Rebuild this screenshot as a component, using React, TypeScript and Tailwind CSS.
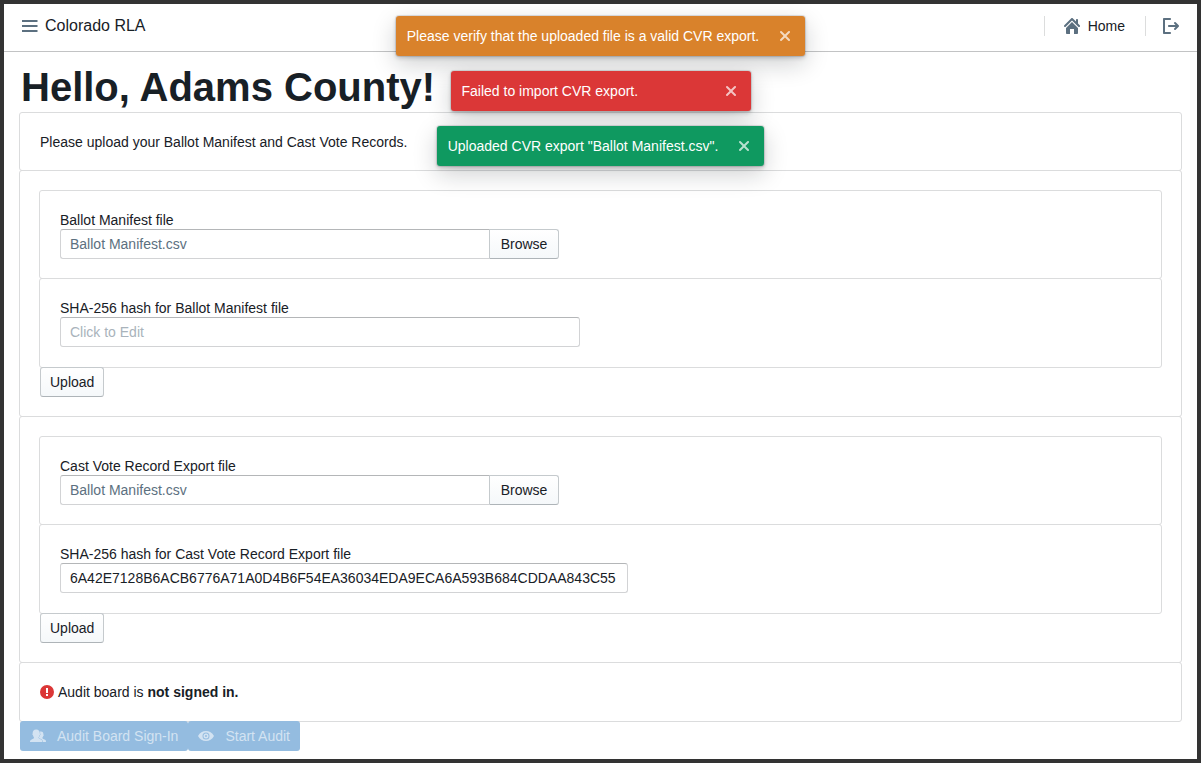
import React, { useState } from "react";

const paths = {
  home: "M2 10v5c0 .55.45 1 1 1h3v-5h4v5h3c.55 0 1-.45 1-1v-5L8 4l-6 6zm13.71-2.71L14 5.59V2c0-.55-.45-1-1-1s-1 .45-1 1v1.59L8.71.29C8.53.11 8.28 0 8 0s-.53.11-.71.29l-7 7a1.003 1.003 0 0 0 1.42 1.42L8 2.41l6.29 6.29c.18.19.43.3.71.3a1.003 1.003 0 0 0 .71-1.71z",
  logOut: "M7 14H2V2h5c.55 0 1-.45 1-1s-.45-1-1-1H1C.45 0 0 .45 0 1v14c0 .55.45 1 1 1h6c.55 0 1-.45 1-1s-.45-1-1-1zm8.71-6.71l-3-3a1.003 1.003 0 0 0-1.42 1.42L12.59 7H6c-.55 0-1 .45-1 1s.45 1 1 1h6.59l-1.29 1.29c-.19.18-.3.43-.3.71a1.003 1.003 0 0 0 1.71.71l3-3c.18-.18.29-.43.29-.71 0-.28-.11-.53-.29-.71z",
  cross: "M9.41 8l3.29-3.29c.19-.18.3-.43.3-.71a1.003 1.003 0 0 0-1.71-.71L8 6.59l-3.29-3.3a1.003 1.003 0 0 0-1.42 1.42L6.59 8 3.3 11.29c-.19.18-.3.43-.3.71a1.003 1.003 0 0 0 1.71.71L8 9.41l3.29 3.29c.18.19.43.3.71.3a1.003 1.003 0 0 0 .71-1.71L9.41 8z",
  menu: "M.5 2h15v2H.5a.5.5 0 0 1 0-2zM.5 7h15v2H.5a.5.5 0 0 1 0-2zM.5 12h15v2H.5a.5.5 0 0 1 0-2z",
  eye: "M0 8c1.800-3.200 4.700-5 8-5s6.200 1.800 8 5c-1.800 3.200-4.700 5-8 5s-6.200-1.800-8-5zm8-3.500a3.500 3.500 0 1 0 0 7 3.500 3.500 0 0 0 0-7zM8 5.500a2.500 2.500 0 1 1 0 5 2.500 2.500 0 0 1 0-5zM8 7a1 1 0 1 0 0 2 1 1 0 0 0 0-2z",
  error: "M8 1a7 7 0 1 0 0 14A7 7 0 0 0 8 1zM7 4h2v5H7zM7 10h2v2H7z",
};

function Icon({ name, className = "" }: { name: keyof typeof paths; className?: string }) {
  return (
    <svg viewBox="0 0 16 16" aria-hidden="true" fillRule="evenodd" className={`size-4 shrink-0 fill-current ${className}`}>
      <path d={paths[name]} />
    </svg>
  );
}

function PeopleIcon() {
  return (
    <svg viewBox="0 0 16 16" aria-hidden="true" className="size-4 shrink-0 fill-current">
      <path d="M10.800 3.500c2 0 2.700 1.300 2.600 3 .2.200.3.400.3.700 0 .4-.2.700-.5.800-.1.800-.8 1.400-.8 2 .1.600.800.900 1.700 1.300 1.400.5 1.900.9 1.900 2.700H8V3.500z" />
      <path
        className="stroke-[#94bce0]"
        strokeWidth="1"
        paintOrder="stroke"
        d="M0 14c0-1.600.300-2 1.700-2.600 1.200-.5 2.200-.8 2.300-1.700 0-.5-.9-1.400-1-2.400-.3-.1-.6-.5-.6-1 0-.3.1-.6.300-.8-.2-2.300.9-4 3.500-4s3.700 1.700 3.500 4c.2.2.3.5.3.800 0 .5-.3.900-.6 1-.1 1-1 1.900-1 2.400.1.900 1.100 1.200 2.300 1.700 1.400.6 1.700 1 1.700 2.600z"
      />
    </svg>
  );
}

const plainButton =
  "h-[30px] shrink-0 border border-[#c5cacd] border-b-[#aeb4b8] bg-linear-to-b from-white to-[#f5f8fa] px-[9px]";
const field =
  "h-[30px] min-w-0 max-w-full border border-[#d2d3d5] border-t-[#b4b6b8] bg-white px-[9px] outline-none";

function Card({ children, className }: { children: React.ReactNode; className: string }) {
  return <div className={`-mt-px rounded-[3px] border border-[#dbdcdd] ${className}`}>{children}</div>;
}

function UploadForm({ id, name, hash, hashWidth }: { id: string; name: string; hash: string; hashWidth: string }) {
  const [value, setValue] = useState(hash);
  return (
    <Card className="p-[19px] pt-5">
      <form onSubmit={(e) => e.preventDefault()}>
        <Card className="px-5 pt-5 pb-[19px]">
          <label htmlFor={`${id}-file`} className="block">{name} file</label>
          <div className="flex w-[499px] max-w-full">
            <input
              id={`${id}-file`}
              readOnly
              value="Ballot Manifest.csv"
              className={`${field} flex-1 rounded-l-[3px] border-r-0 text-[#5c7080]`}
            />
            <button type="button" className={`${plainButton} w-[70px] rounded-r-[3px]`}>Browse</button>
          </div>
        </Card>
        <Card className="p-5">
          <label htmlFor={`${id}-hash`} className="block">SHA-256 hash for {name} file</label>
          <input
            id={`${id}-hash`}
            value={value}
            onChange={(e) => setValue(e.target.value)}
            placeholder="Click to Edit"
            className={`${field} ${hashWidth} block rounded-[3px] placeholder:text-[#a9b3bb]`}
          />
        </Card>
        <button type="submit" className={`${plainButton} -mt-px ml-px block rounded-[3px]`}>Upload</button>
      </form>
    </Card>
  );
}

function Toast({ children, className }: { children: React.ReactNode; className: string }) {
  return (
    <div
      role="alert"
      className={`pointer-events-auto flex h-10 min-w-[300px] items-center justify-between rounded-[3px] pr-3 pl-[11px] text-white shadow-[0_0_0_1px_rgba(16,22,26,0.1),0_2px_4px_rgba(16,22,26,0.2),0_8px_24px_rgba(16,22,26,0.2)] ${className}`}
    >
      <span>{children}</span>
      <button type="button" aria-label="Close" className="ml-[18px] text-white/70">
        <Icon name="cross" />
      </button>
    </div>
  );
}

const blueButton = "flex h-[30px] items-center gap-[11px] rounded-[3px] bg-[#94bce0] px-[10px] text-[#d3e3f2]";

export default function App() {
  return (
    <div className="relative min-h-screen border-4 border-[#333] bg-white font-['Liberation_Sans',Arial,sans-serif] text-[14px] leading-[18px] text-[#182026]">
      <header className="flex h-12 items-center justify-between border-b border-[#c2c3c4] pr-[18px] pb-[3px] pl-[18px]">
        <div className="flex items-center gap-[7px]">
          <button type="button" aria-label="Menu" className="text-[#5c7080]"><Icon name="menu" /></button>
          <span className="text-[16px]">Colorado RLA</span>
        </div>
        <nav className="flex items-center">
          <span className="h-5 w-px bg-[#dcdddd]" />
          <a href="#home" className="mr-5 ml-[19px] flex items-center gap-2">
            <Icon name="home" className="text-[#5c7080]" />
            Home
          </a>
          <span className="h-5 w-px bg-[#dcdddd]" />
          <button type="button" aria-label="Log out" className="ml-[17px] text-[#5c7080]"><Icon name="logOut" /></button>
        </nav>
      </header>

      <main className="px-[15px] pb-2">
        <h1 className="px-[2px] pt-[15px] pb-[6px] text-[40px] leading-[40px] font-bold">Hello, Adams County!</h1>
        <Card className="px-5 pt-5 pb-[19px]">Please upload your Ballot Manifest and Cast Vote Records.</Card>
        <UploadForm id="manifest" name="Ballot Manifest" hash="" hashWidth="w-[520px]" />
        <UploadForm
          id="cvr"
          name="Cast Vote Record Export"
          hash="6A42E7128B6ACB6776A71A0D4B6F54EA36034EDA9ECA6A593B684CDDAA843C55"
          hashWidth="w-[568px]"
        />
        <Card className="px-[19px] py-5">
          <p className="flex items-center gap-[3px]">
            <Icon name="error" className="text-[#db3737]" />
            <span>Audit board is <strong>not signed in.</strong></span>
          </p>
        </Card>
        <div className="-mt-px ml-px flex">
          <button type="button" disabled className={blueButton}>
            <PeopleIcon />
            Audit Board Sign-In
          </button>
          <button type="button" disabled className={blueButton}>
            <Icon name="eye" />
            Start Audit
          </button>
        </div>
      </main>

      <div className="pointer-events-none absolute inset-x-0 top-3 flex flex-col items-center gap-[15px]">
        <Toast className="bg-[#d9822b]">Please verify that the uploaded file is a valid CVR export.</Toast>
        <Toast className="bg-[#db3737]">Failed to import CVR export.</Toast>
        <Toast className="bg-[#0f9960]">Uploaded CVR export "Ballot Manifest.csv".</Toast>
      </div>
    </div>
  );
}
